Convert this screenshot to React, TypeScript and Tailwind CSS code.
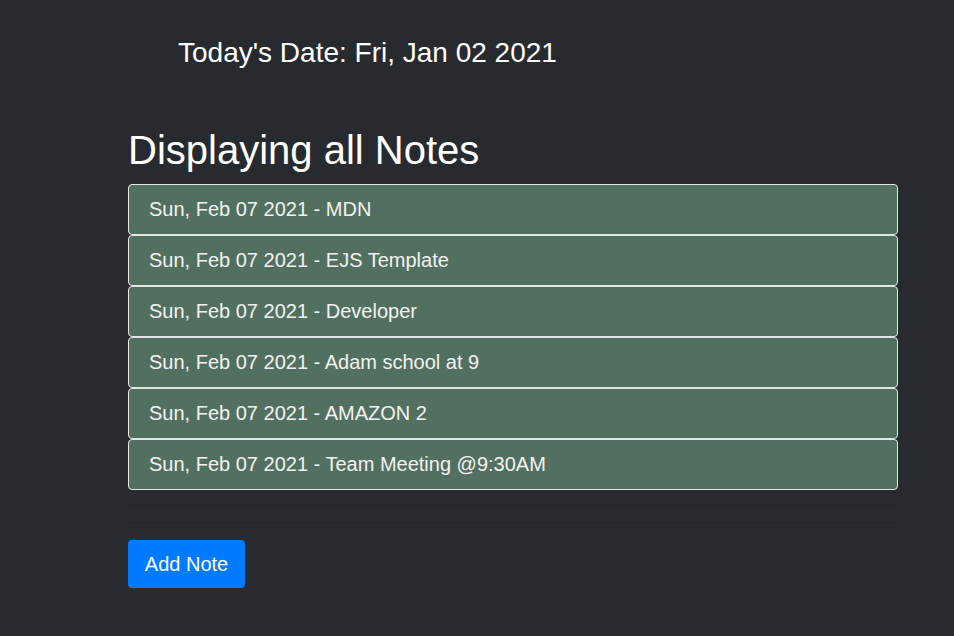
const notes = [
  'Sun, Feb 07 2021 - MDN',
  'Sun, Feb 07 2021 - EJS Template',
  'Sun, Feb 07 2021 - Developer',
  'Sun, Feb 07 2021 - Adam school at 9',
  'Sun, Feb 07 2021 - AMAZON 2',
  'Sun, Feb 07 2021 - Team Meeting @9:30AM',
];

export default function App() {
  return (
    <div className="min-h-[636px] bg-[#272b30] font-['Liberation_Sans',Arial,sans-serif] text-white">
      <div className="pl-[128px] pr-[56px]">
        {/* Date header */}
        <div className="pl-[50px] pt-[36px] text-[28px] leading-[34px]">
          Today's Date: Fri, Jan 02 2021
        </div>

        {/* Notes list */}
        <h1 className="mt-[56px] mb-[10px] text-[40px] leading-[48px]">Displaying all Notes</h1>
        <ul className="flex flex-col">
          {notes.map((note) => (
            <li
              key={note}
              className="rounded-[4px] border border-[#e6e6e6] bg-[#52705f] px-5 py-3 text-[20px] leading-[25px] text-[#f2f2f2]"
            >
              {note}
            </li>
          ))}
        </ul>

        <hr className="mt-[15px] border-t border-[#22262a]" />
        <hr className="mt-[16px] border-t border-[#22262a]" />

        <button className="mt-[17px] h-[48px] w-[117px] rounded-[4px] bg-[#007bff] text-[20px] leading-[30px] text-white">
          Add Note
        </button>
      </div>
    </div>
  );
}
